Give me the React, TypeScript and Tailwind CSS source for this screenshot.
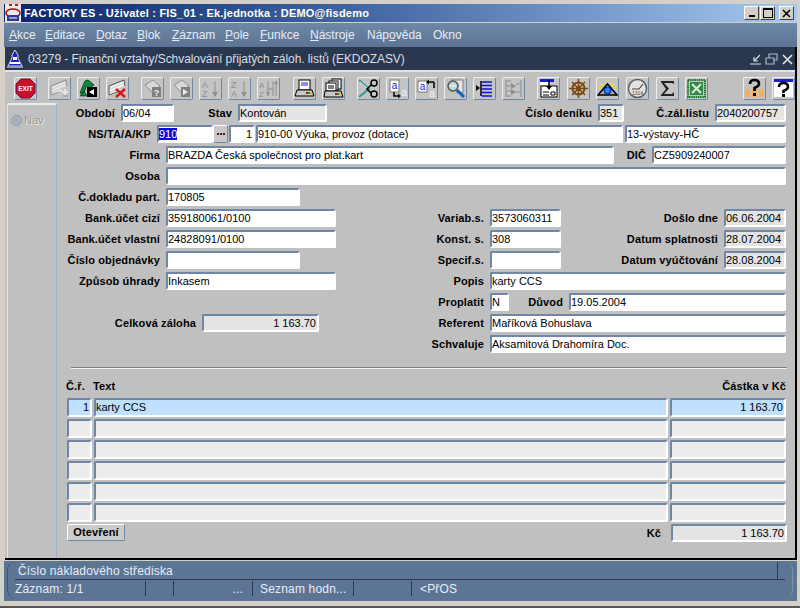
import React from "react";

function Label({ className = "", children }: { className?: string; children?: React.ReactNode }) {
  return (
    <div className={`mr-[6px] h-[18px] shrink-0 whitespace-nowrap text-right text-[11px] leading-[19px] font-bold tracking-[0.12px] text-black ${className}`}>
      {children}
    </div>
  );
}

function Field({ className = "", children }: { className?: string; children?: React.ReactNode }) {
  return (
    <div className={`h-[18px] shrink-0 overflow-hidden whitespace-nowrap rounded-[2px] border-2 border-t-[#6f86a6] border-l-[#6f86a6] border-r-white border-b-white text-[11px] leading-[14px] text-black ${className}`}>
      {children}
    </div>
  );
}

function Row({ children }: { children: React.ReactNode }) {
  return <div className="flex h-[21px] items-start">{children}</div>;
}

function GridRow({ no, text, amount, active }: { no?: string; text?: string; amount?: string; active?: boolean }) {
  const bg = active ? "bg-[#c0e0ff]" : "bg-[#ececec]";
  return (
    <div className="flex h-[21px] items-start pl-[10px]">
      <Field className={`h-[19px] w-[25px] pr-[1px] text-right leading-[15px] ${bg}`}>{no}</Field>
      <Field className={`ml-[2px] h-[19px] w-[574px] leading-[15px] ${bg}`}>{text}</Field>
      <Field className={`ml-[2px] h-[19px] w-[116px] pr-[1px] text-right leading-[15px] ${bg}`}>{amount}</Field>
    </div>
  );
}

function Tool({ className = "", children }: { className?: string; children: React.ReactNode }) {
  return (
    <div className={`h-[23px] w-[23px] shrink-0 rounded-[2px] border border-t-[#eeeeee] border-l-[#eeeeee] border-r-[#6f86a6] border-b-[#6f86a6] bg-[#c4c4c4] ${className}`}>
      <svg viewBox="0 0 21 21" width="21" height="21" fontFamily="Liberation Sans, sans-serif">
        {children}
      </svg>
    </div>
  );
}

const dim = "#8e8e8e";

function Stack({ c = "#e6e6e6", d = dim }: { c?: string; d?: string }) {
  return (
    <g fill="none" strokeWidth="1">
      <path d="M2 10 L17 4 M2 13 L17 7 M2 16 L13 12" stroke={c} strokeWidth="2" />
      <path d="M2 8 L17 2 L18 8 M2 8 V17 L10 14" stroke={d} />
    </g>
  );
}

function Toolbar() {
  return (
    <div className="flex h-[33px] shrink-0 items-start border-t-2 border-t-[#e4e4e4] bg-[#c0c0c0] pl-[9px] pt-[5px]">
      <Tool>
        <polygon points="6,1 15,1 20,6 20,15 15,20 6,20 1,15 1,6" fill="#c4122f" stroke="#7a0a1c" />
        <text x="10.5" y="13" textAnchor="middle" fontSize="6.5" fontWeight="bold" fill="#fff">EXIT</text>
      </Tool>
      <Tool className="ml-[11px]">
        <Stack />
        <path d="M13 14 H19 M16 11 V17" stroke="#e8e8e8" strokeWidth="2" />
        <path d="M14 18 H19" stroke={dim} />
      </Tool>
      <Tool className="ml-[6px]">
        <path d="M2 15 L7 3 L10 2 L16 7 L12 10 L8 8 L6 16 Z" fill="#0f8a3c" stroke="#064d20" />
        <path d="M2 18 L6 13 L9 18 Z" fill="#0f8a3c" stroke="#000" strokeWidth="0.5" />
        <rect x="9" y="9" width="10" height="10" fill="#000" />
        <polygon points="11,14 16,11 16,17" fill="#fff" />
      </Tool>
      <Tool className="ml-[6px]">
        <Stack c="#f0f0f0" d="#555" />
        <path d="M9 11 L18 19 M18 11 L9 19" stroke="#d8141c" strokeWidth="2.5" />
      </Tool>

      <Tool className="ml-[12px]">
        <path d="M3 7 L11 2 L18 8 L10 14 Z" fill="#d8d8d8" stroke={dim} />
        <rect x="10" y="9" width="9" height="10" fill="#808080" />
        <text x="14.5" y="17.5" textAnchor="middle" fontSize="9" fontWeight="bold" fill="#eee">?</text>
      </Tool>
      <Tool className="ml-[6px]">
        <path d="M3 7 L11 2 L18 8 L10 14 Z" fill="#d8d8d8" stroke={dim} />
        <rect x="10" y="9" width="9" height="10" fill="#808080" />
        <polygon points="12,11 17,14 12,17" fill="#eee" />
      </Tool>
      <Tool className="ml-[6px]">
        <text x="2" y="10" fontSize="9" fill={dim}>A</text>
        <text x="2" y="19" fontSize="9" fill={dim}>Z</text>
        <path d="M15 3 V16" stroke={dim} />
        <polygon points="12,14 18,14 15,19" fill={dim} />
      </Tool>
      <Tool className="ml-[6px]">
        <text x="2" y="10" fontSize="9" fill={dim}>Z</text>
        <text x="2" y="19" fontSize="9" fill={dim}>A</text>
        <path d="M15 3 V16" stroke={dim} />
        <polygon points="12,14 18,14 15,19" fill={dim} />
      </Tool>
      <Tool className="ml-[6px]">
        <text x="1" y="10" fontSize="8" fill={dim}>A</text>
        <text x="1" y="19" fontSize="8" fill={dim}>Z</text>
        <path d="M10 3 V18 M15 3 V18 M10 11 H15 M18 4 V18" stroke={dim} />
        <polygon points="8,14 12,14 10,18" fill={dim} />
        <polygon points="16,6 20,6 18,2" fill={dim} />
      </Tool>

      <Tool className="ml-[13px]">
        <rect x="5" y="2" width="11" height="10" fill="#fff" stroke="#000" />
        <path d="M7 5 H14 M7 7 H14" stroke="#1a1ae0" />
        <path d="M3 12 H18 L20 18 H1 Z" fill="#c8c8c8" stroke="#000" />
        <path d="M12 15 H14" stroke="#d01010" strokeWidth="2" />
        <path d="M14 15 H16" stroke="#10a030" strokeWidth="2" />
        <path d="M16 15 H18" stroke="#e0c020" strokeWidth="2" />
      </Tool>
      <Tool className="ml-[6px]">
        <rect x="9" y="1" width="9" height="10" fill="#fff" stroke="#000" />
        <rect x="6" y="3" width="9" height="9" fill="#fff" stroke="#000" />
        <rect x="3" y="5" width="10" height="8" fill="#fff" stroke="#000" />
        <path d="M5 8 H11 M5 10 H11" stroke="#000" />
        <path d="M2 13 H18 L20 19 H1 Z" fill="#c8c8c8" stroke="#000" />
        <path d="M12 16 H14" stroke="#d01010" strokeWidth="2" />
        <path d="M14 16 H16" stroke="#10a030" strokeWidth="2" />
        <path d="M16 16 H18" stroke="#e0c020" strokeWidth="2" />
      </Tool>

      <Tool className="ml-[12px]">
        <path d="M1 2 L11 11 L1 19" fill="none" stroke="#2f9a9a" strokeWidth="2" />
        <path d="M2 4 L10 11" stroke="#d8f0f0" />
        <path d="M13 7 L9 11 L13 15" fill="none" stroke="#000" strokeWidth="1.5" />
        <circle cx="16" cy="16" r="3" fill="none" stroke="#000" strokeWidth="1.5" />
        <circle cx="16" cy="5" r="3" fill="none" stroke="#000" strokeWidth="1.5" />
      </Tool>
      <Tool className="ml-[6px]">
        <rect x="3" y="2" width="9" height="12" fill="#fff" stroke="#777" />
        <text x="7.5" y="11" textAnchor="middle" fontSize="10" fill="#1414e0">a</text>
        <path d="M7 14 V18 H12" fill="none" stroke="#000" strokeWidth="1.5" />
        <polygon points="11,15.5 14,18 11,20.5" fill="#000" />
        <text x="17" y="18" textAnchor="middle" fontSize="10" fill="#f4f4f4">a</text>
      </Tool>
      <Tool className="ml-[6px]">
        <rect x="2" y="3" width="9" height="11" fill="#fff" stroke="#777" />
        <text x="6.5" y="12" textAnchor="middle" fontSize="10" fill="#1414e0">a</text>
        <path d="M18 4 V10 M18 4 H12" fill="none" stroke="#000" strokeWidth="1.5" />
        <polygon points="13,1.5 10,4 13,6.5" fill="#000" />
        <text x="16" y="19" textAnchor="middle" fontSize="10" fill="#f4f4f4">a</text>
      </Tool>
      <Tool className="ml-[6px]">
        <path d="M6 2 H18 V15 H12 Z" fill="#e4e4e4" stroke="#808080" />
        <circle cx="8" cy="8" r="5" fill="#b8d8d8" stroke="#555" strokeWidth="1.5" />
        <path d="M5 8 H11" stroke="#fff" />
        <path d="M12 12 L19 19" stroke="#1060c0" strokeWidth="3" />
      </Tool>
      <Tool className="ml-[6px]">
        <polygon points="2,7 6,10 2,13" fill="#000" />
        <path d="M7 3 V18" stroke="#000" strokeWidth="1.5" />
        <path d="M8 4 H18 M8 7.5 H18 M8 11 H18 M8 14.5 H18 M8 18 H18" stroke="#1010d0" strokeWidth="1.5" />
      </Tool>
      <Tool className="ml-[6px]">
        <path d="M3 2 V19 M3 3 H8 M3 18 H8 M18 2 V19 M13 6 H18 M13 14 H18 M3 8 H8 M3 13 H8" stroke={dim} />
        <polygon points="8,5 13,8 8,11" fill={dim} />
        <polygon points="8,11 13,14 8,17" fill={dim} />
      </Tool>

      <Tool className="ml-[12px]">
        <rect x="2" y="1" width="14" height="3" fill="#1a1ad0" />
        <rect x="2" y="4" width="8" height="3" fill="#fff" />
        <rect x="3" y="8" width="16" height="11" fill="#fff" stroke="#000" />
        <path d="M11 2 V9" stroke="#000" strokeWidth="1.5" />
        <polygon points="8,8 14,8 11,12" fill="#000" />
        <path d="M5 14 H11 M5 17 H11 M13 14 H17 V17 H13 Z" fill="none" stroke="#000" />
      </Tool>
      <Tool className="ml-[7px]">
        <g stroke="#7a4a10" fill="none">
          <circle cx="10.5" cy="10.5" r="6" strokeWidth="2" />
          <circle cx="10.5" cy="10.5" r="1.8" strokeWidth="1.5" />
          <path d="M10.5 1 V20 M1 10.5 H20 M4 4 L17 17 M17 4 L4 17" strokeWidth="1.5" />
        </g>
      </Tool>
      <Tool className="ml-[6px]">
        <path d="M1 17 L10.5 6 L20 17 Z" fill="#a8a8a8" stroke="#000" strokeWidth="1.5" />
        <circle cx="10.5" cy="12.5" r="3.5" fill="#1888e8" stroke="#1010a0" />
        <path d="M4 5 L6 8 M10.5 2 V4 M17 5 L15 8 M1 9 L4 10 M20 9 L17 10" stroke="#f0e010" strokeWidth="1.5" />
      </Tool>
      <Tool className="ml-[7px]">
        <circle cx="10.5" cy="10.5" r="9" fill="#e4e4e4" stroke="#606060" strokeWidth="1.5" />
        <path d="M5 11 H12 L16 6" fill="none" stroke="#404040" strokeWidth="1.2" />
        <text x="10.5" y="17" textAnchor="middle" fontSize="5" fill="#404040">1314</text>
      </Tool>
      <Tool className="ml-[7px]">
        <path d="M4 3 H17 V6 L15 5 H7 L12 10.5 L7 16 H15 L17 14 V18 H4 V17 L9 11 L4 4 Z" fill="#222" />
      </Tool>
      <Tool className="ml-[6px]">
        <rect x="2" y="2" width="17" height="17" fill="none" stroke="#1a7a30" strokeWidth="2" strokeDasharray="1.5 0.7" />
        <rect x="4" y="4" width="13" height="13" fill="#2f8a48" />
        <path d="M6 6 L15 15 M15 6 L6 15" stroke="#d8e8d8" strokeWidth="2.2" />
      </Tool>

      <Tool className="ml-[35px]">
        <rect x="1" y="11" width="5" height="8" fill="#f0b060" />
        <rect x="8" y="11" width="5" height="8" fill="#f0b060" />
        <rect x="15" y="11" width="5" height="8" fill="#f0b060" />
        <path d="M6 6 Q6 2 10.5 2 Q15 2 15 6 Q15 8 10.5 10 V13" fill="none" stroke="#000" strokeWidth="2.6" />
        <rect x="9" y="15" width="3" height="3" fill="#000" />
      </Tool>
      <Tool className="ml-[6px]">
        <rect x="1" y="1" width="19" height="18" fill="#fff" />
        <rect x="1" y="1" width="19" height="3" fill="#2020c8" />
        <path d="M6 9 Q6 5 10.5 5 Q15 5 15 9 Q15 11 10.5 13 V15" fill="none" stroke="#000" strokeWidth="2.6" />
        <rect x="9" y="16" width="3" height="3" fill="#000" />
      </Tool>
    </div>
  );
}

export default function App() {
  return (
    <div className="flex h-[608px] w-[800px] flex-col overflow-hidden bg-[#d4d0c8] pl-[4px] pr-[3px] pt-[4px] font-['Liberation_Sans',sans-serif]">
      {/* title bar */}
      <div className="flex h-[18px] shrink-0 items-center bg-gradient-to-r from-[#0a246a] via-[#4a6ea8] to-[#a6caf0] pr-[3px]">
        <svg viewBox="0 0 18 18" width="18" height="18" className="mr-[2px] shrink-0">
          <rect x="1" y="0" width="16" height="18" fill="#f0e8e8" />
          <path d="M5 1 H8 M11 1 H14" stroke="#d01010" strokeWidth="2" />
          <ellipse cx="9" cy="9" rx="7" ry="4" fill="none" stroke="#a01010" strokeWidth="1.5" />
          <rect x="3" y="11" width="12" height="6" fill="#2a3a90" />
          <path d="M5 14 H13" stroke="#fff" />
        </svg>
        <span className="text-[11px] font-bold tracking-[0.2px] whitespace-nowrap text-white">FACTORY ES - Uživatel : FIS_01 - Ek.jednotka : DEMO@fisdemo</span>
        <div className="ml-auto flex items-center">
          <div className="flex h-[14px] w-[15px] items-end justify-center rounded-[1px] border border-t-white border-l-white border-r-[#404040] border-b-[#404040] bg-[#d4d0c8] pb-[2px]">
            <div className="h-[2px] w-[6px] bg-black" />
          </div>
          <div className="ml-[1px] flex h-[14px] w-[15px] items-center justify-center rounded-[1px] border border-t-white border-l-white border-r-[#404040] border-b-[#404040] bg-[#d4d0c8]">
            <div className="h-[10px] w-[10px] border border-t-2 border-black" />
          </div>
          <div className="ml-[4px] flex h-[14px] w-[15px] items-center justify-center rounded-[1px] border border-t-white border-l-white border-r-[#404040] border-b-[#404040] bg-[#d4d0c8]">
            <svg viewBox="0 0 9 9" width="9" height="9"><path d="M1 1 L8 8 M8 1 L1 8" stroke="#000" strokeWidth="1.6" /></svg>
          </div>
        </div>
      </div>

      {/* menu */}
      <div className="mt-px flex h-[24px] shrink-0 items-center bg-gradient-to-b from-[#6f87a6] to-[#5c7495] pl-[5px] text-[12px] whitespace-nowrap text-[#e6edf5]">
        <span className="w-[36px]"><u>A</u>kce</span>
        <span className="w-[51px]"><u>E</u>ditace</span>
        <span className="w-[41px]"><u>D</u>otaz</span>
        <span className="w-[35px]"><u>B</u>lok</span>
        <span className="w-[53px]"><u>Z</u>áznam</span>
        <span className="w-[35px]"><u>P</u>ole</span>
        <span className="w-[50px]"><u>F</u>unkce</span>
        <span className="w-[57px]"><u>N</u>ástroje</span>
        <span className="w-[66px]">Náp<u>o</u>věda</span>
        <span>Okno</span>
      </div>

      {/* mdi window */}
      <div className="ml-px flex h-[513px] shrink-0 flex-col border-b-2 border-r-2 border-b-black border-r-black bg-[#c0c0c0]">
        <div className="flex h-[23px] shrink-0 items-center bg-[#2a384f] pl-[1px] pr-[1px] text-[12px] tracking-[-0.07px] whitespace-nowrap text-[#d7dfe8]">
          <svg viewBox="0 0 18 20" width="18" height="20" className="mr-[4px] shrink-0">
            <path d="M9 1 L12 6 V9 L16 17 H2 L6 9 V6 Z" fill="#1a22c8" stroke="#d4d8e0" />
            <rect x="7" y="8" width="4" height="3" fill="#fff" />
            <rect x="4" y="13" width="10" height="2" fill="#fff" />
            <rect x="1" y="17" width="16" height="2" fill="#9098a8" />
          </svg>
          <span>03279 - Finanční vztahy/Schvalování přijatých záloh. listů (EKDOZASV)</span>
          <div className="ml-auto flex items-center">
            <svg viewBox="0 0 46 14" width="46" height="14">
              <path d="M2 12 H13 M12 3 L6 9 M6 5 V9 H10" fill="none" stroke="#d8e0e8" strokeWidth="1.2" />
              <path d="M18 6 H26 V12 H18 Z M21 6 V2 H29 V8 H26" fill="none" stroke="#a8b4c4" strokeWidth="1.2" />
              <path d="M35 3 L44 12 M44 3 L35 12" stroke="#e8eef4" strokeWidth="1.5" />
            </svg>
          </div>
        </div>

        <Toolbar />

        <div className="flex min-h-0 flex-1 pl-[2px]">
          {/* navigator side */}
          <div className="flex w-[50px] shrink-0 flex-col rounded-tl-[2px] border-t-2 border-r border-l border-t-[#ececec] border-r-[#9db0c6] border-l-[#e4e4e4] pl-[3px] pt-[8px]">
            <div className="flex items-center gap-[2px] text-[11px] leading-[14px] text-[#9a9a9a] [text-shadow:1px_1px_0_#ececec]">
              <div className="flex h-[11px] w-[11px] items-center justify-center rounded-full border border-[#8a9ab0] bg-[#b4b4b4]">
                <div className="h-[7px] w-[7px] rounded-full bg-[#a4b0c0]" />
              </div>
              Nav
            </div>
          </div>

          {/* form */}
          <div className="flex min-w-0 flex-1 flex-col pt-[1px]">
            <Row>
              <Label className="w-[58px]">Období</Label>
              <Field className="w-[53px] bg-white">06/04</Field>
              <Label className="w-[58px]">Stav</Label>
              <Field className="w-[89px] bg-[#e4e4e4]">Kontován</Field>
              <Label className="w-[265px]">Číslo deníku</Label>
              <Field className="w-[26px] bg-[#e4e4e4]">351</Field>
              <Label className="w-[85px]">Č.zál.listu</Label>
              <Field className="w-[71px] bg-[#e4e4e4]">2040200757</Field>
            </Row>
            <Row>
              <Label className="w-[94px]">NS/TA/A/KP</Label>
              <Field className="w-[56px] bg-white"><span className="bg-[#0a0ad8] text-white">910</span></Field>
              <div className="flex h-[18px] w-[15px] shrink-0 items-center justify-center rounded-[2px] border border-t-white border-l-white border-r-[#6f86a6] border-b-[#6f86a6] bg-[#c8c8c8]">
                <div className="flex gap-px">
                  <div className="h-[2px] w-[2px] bg-[#5a1010]" />
                  <div className="h-[2px] w-[2px] bg-[#5a1010]" />
                  <div className="h-[2px] w-[2px] bg-[#5a1010]" />
                </div>
              </div>
              <Field className="ml-px w-[26px] bg-white pr-[1px] text-right">1</Field>
              <Field className="ml-px w-[367px] bg-white">910-00 Výuka, provoz (dotace)</Field>
              <Field className="ml-[2px] w-[161px] bg-white">13-výstavy-HČ</Field>
            </Row>
            <Row>
              <Label className="w-[103px]">Firma</Label>
              <Field className="w-[448px] bg-white">BRAZDA Česká společnost pro plat.kart</Field>
              <Label className="w-[32px]">DIČ</Label>
              <Field className="w-[134px] bg-white">CZ5909240007</Field>
            </Row>
            <Row>
              <Label className="w-[103px]">Osoba</Label>
              <Field className="w-[620px] bg-white" />
            </Row>
            <Row>
              <Label className="w-[103px]">Č.dokladu part.</Label>
              <Field className="w-[134px] bg-white">170805</Field>
            </Row>
            <Row>
              <Label className="w-[103px]">Bank.účet cizí</Label>
              <Field className="w-[170px] bg-white">359180061/0100</Field>
              <Label className="w-[148px]">Variab.s.</Label>
              <Field className="w-[71px] bg-white">3573060311</Field>
              <Label className="w-[157px]">Došlo dne</Label>
              <Field className="w-[62px] bg-[#e4e4e4]">06.06.2004</Field>
            </Row>
            <Row>
              <Label className="w-[103px]">Bank.účet vlastní</Label>
              <Field className="w-[170px] bg-white">24828091/0100</Field>
              <Label className="w-[148px]">Konst. s.</Label>
              <Field className="w-[71px] bg-white">308</Field>
              <Label className="w-[157px]">Datum splatnosti</Label>
              <Field className="w-[62px] bg-[#e4e4e4]">28.07.2004</Field>
            </Row>
            <Row>
              <Label className="w-[103px]">Číslo objednávky</Label>
              <Field className="w-[134px] bg-white" />
              <Label className="w-[184px]">Specif.s.</Label>
              <Field className="w-[71px] bg-white" />
              <Label className="w-[157px]">Datum vyúčtování</Label>
              <Field className="w-[62px] bg-[#e4e4e4]">28.08.2004</Field>
            </Row>
            <Row>
              <Label className="w-[103px]">Způsob úhrady</Label>
              <Field className="w-[170px] bg-white">Inkasem</Field>
              <Label className="w-[148px]">Popis</Label>
              <Field className="w-[296px] bg-white">karty CCS</Field>
            </Row>
            <Row>
              <Label className="w-[427px]">Proplatit</Label>
              <Field className="w-[19px] bg-white">N</Field>
              <Label className="w-[54px]">Důvod</Label>
              <Field className="w-[217px] bg-white">19.05.2004</Field>
            </Row>
            <Row>
              <Label className="w-[139px]">Celková záloha</Label>
              <Field className="w-[117px] bg-[#e4e4e4] pr-[1px] text-right">1 163.70</Field>
              <Label className="w-[165px]">Referent</Label>
              <Field className="w-[296px] bg-white">Maříková Bohuslava</Field>
            </Row>
            <Row>
              <Label className="w-[427px]">Schvaluje</Label>
              <Field className="w-[296px] bg-white">Aksamitová Drahomíra Doc.</Field>
            </Row>

            <div className="ml-[14px] mr-[8px] mt-[11px] h-[2px] border-t border-b border-t-[#808080] border-b-[#f0f0f0]" />

            <div className="mr-[9px] mt-[9px] flex h-[18px] items-start pl-[9px] text-[11px] leading-[16px] font-bold tracking-[0.12px] text-black">
              <span className="w-[27px]">Č.ř.</span>
              <span>Text</span>
              <span className="ml-auto">Částka v Kč</span>
            </div>

            <div className="mt-[2px]">
              <GridRow no="1" text="karty CCS" amount="1 163.70" active />
              <GridRow />
              <GridRow />
              <GridRow />
              <GridRow />
              <GridRow />
            </div>

            <div className="flex items-start pl-[10px]">
              <div className="flex h-[17px] w-[58px] shrink-0 items-center justify-center rounded-[2px] border border-t-white border-l-white border-r-[#6f86a6] border-b-[#6f86a6] bg-[#cccccc] text-[11px] font-bold tracking-[0.12px] text-black">
                Otevření
              </div>
              <div className="ml-auto mr-[10px] h-[18px] text-[11px] leading-[19px] font-bold tracking-[0.12px] text-black">Kč</div>
              <Field className="mr-[8px] w-[116px] bg-[#e4e4e4] pr-[1px] text-right">1 163.70</Field>
            </div>
          </div>
        </div>
      </div>

      {/* status */}
      <div className="mt-[1px] h-[40px] shrink-0 bg-[#5d7595] pl-[3px] pr-[4px] pt-[1px] text-[12px] tracking-[0.18px] text-[#e6edf5]">
        <div className="h-[36px] rounded-[8px] border border-[#3d5272] border-y-0 border-r-[#8093ad]">
          <div className="mx-[7px] flex h-[18px] items-center border-b border-b-[#2a3850] pl-[3px]">
            <span>Číslo nákladového střediska</span>
            <div className="ml-auto mr-[7px] h-[17px] border-l border-l-[#2a3850]" />
          </div>
          <div className="mx-[7px] flex h-[17px] items-center whitespace-nowrap">
            <span className="w-[130px]">Záznam: 1/1</span>
            <div className="h-[15px] border-l border-l-[#2a3850]" />
            <div className="w-[27px]" />
            <div className="h-[15px] border-l border-l-[#2a3850]" />
            <span className="w-[78px] pr-[9px] text-right">...</span>
            <div className="h-[15px] border-l border-l-[#2a3850]" />
            <span className="w-[100px] pl-[7px]">Seznam hodn...</span>
            <div className="h-[15px] border-l border-l-[#2a3850]" />
            <div className="w-[57px]" />
            <div className="h-[15px] border-l border-l-[#2a3850]" />
            <span className="pl-[8px]">&lt;PřOS</span>
          </div>
        </div>
      </div>

      <div className="flex-1" />
      <div className="-ml-[4px] -mr-[3px] h-[2px] shrink-0 bg-[#555555]" />
    </div>
  );
}
